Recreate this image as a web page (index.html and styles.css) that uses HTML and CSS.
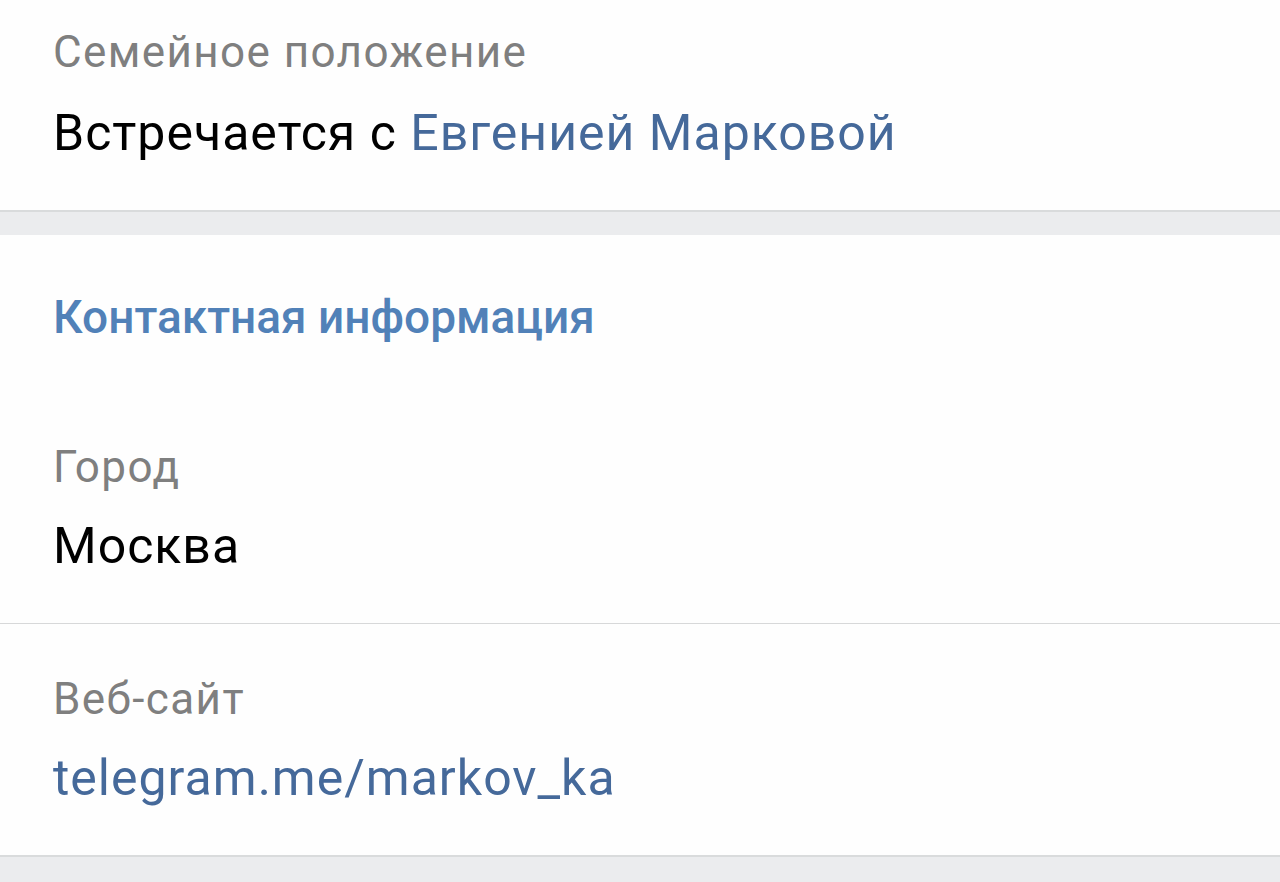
FILE: index.html
```html
<!DOCTYPE html>
<html lang="ru">
<head>
<meta charset="utf-8">
<link rel="stylesheet" href="styles.css">
</head>
<body>
<div class="page">
  <section class="card card-top">
    <div class="row row-first">
      <div class="label">Семейное положение</div>
      <div class="value">Встречается с <span class="link">Евгенией Марковой</span></div>
    </div>
  </section>
  <div class="band"></div>
  <section class="card card-contacts">
    <h2 class="header">Контактная информация</h2>
    <div class="row row-city">
      <div class="label">Город</div>
      <div class="value">Москва</div>
    </div>
    <div class="divider"></div>
    <div class="row row-site">
      <div class="label">Веб-сайт</div>
      <div class="value link">telegram.me/markov_ka</div>
    </div>
  </section>
  <div class="band band-bottom"></div>
</div>
</body>
</html>
```

FILE: styles.css
```css
html, body {
  margin: 0;
  padding: 0;
  background: #ebecee;
}
body {
  font-family: Roboto, "Noto Sans", sans-serif;
  width: 1280px;
  height: 882px;
  overflow: hidden;
}
.page {
  display: flex;
  flex-direction: column;
}
.card {
  background: #fefefe;
  display: flex;
  flex-direction: column;
}
.card-top {
  height: 210px;
  box-sizing: border-box;
}
.row {
  display: flex;
  flex-direction: column;
  gap: 24px;
  padding: 0 53px;
}
.row-first {
  padding-top: 27px;
  gap: 26px;
}
.label {
  font-size: 44px;
  line-height: 50px;
  letter-spacing: 1.4px;
  color: #7f7f7f;
  white-space: nowrap;
}
.value {
  font-size: 50px;
  line-height: 60px;
  letter-spacing: 1px;
  color: #000;
  white-space: nowrap;
}
.link {
  color: #45699a;
}
.band {
  height: 25px;
  background: #ebecee;
  border-top: 2px solid #d9dbdc;
  box-sizing: border-box;
}
.card-contacts {
  height: 620px;
  box-sizing: border-box;
  padding-top: 54px;
}
.header {
  margin: 0;
  padding: 0 53px;
  font-size: 46px;
  line-height: 56px;
  font-weight: 500;
  color: #5181b8;
}
.row-city {
  padding-top: 97px;
  padding-bottom: 47px;
}
.divider {
  height: 1px;
  background: #d7d8d9;
}
.row-site {
  padding-top: 50px;
}
.band-bottom {
  height: 27px;
}
```
